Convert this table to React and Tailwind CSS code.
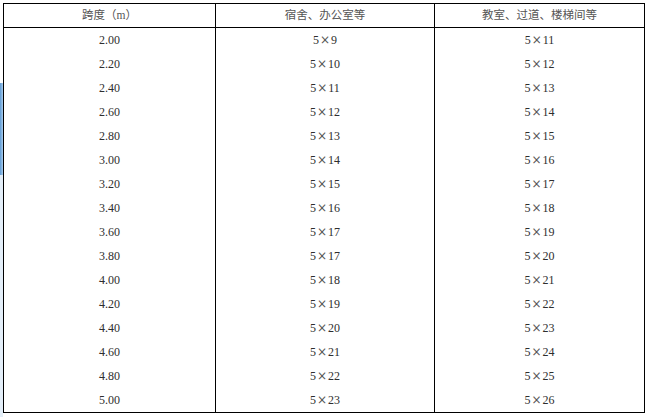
import React from 'react';

// 跨度 / 宿舍、办公室等 / 教室、过道、楼梯间等
const rows = [
    ['2.00', '5×9', '5×11'],
    ['2.20', '5×10', '5×12'],
    ['2.40', '5×11', '5×13'],
    ['2.60', '5×12', '5×14'],
    ['2.80', '5×13', '5×15'],
    ['3.00', '5×14', '5×16'],
    ['3.20', '5×15', '5×17'],
    ['3.40', '5×16', '5×18'],
    ['3.60', '5×17', '5×19'],
    ['3.80', '5×17', '5×20'],
    ['4.00', '5×18', '5×21'],
    ['4.20', '5×19', '5×22'],
    ['4.40', '5×20', '5×23'],
    ['4.60', '5×21', '5×24'],
    ['4.80', '5×22', '5×25'],
    ['5.00', '5×23', '5×26'],
];

const headers = ['跨度（m）', '宿舍、办公室等', '教室、过道、楼梯间等'];

// 5×9 -> wider, lighter multiplication sign like the source doc
const Cell = ({ v }) => {
    if (!v.includes('×')) return v;
    const [a, b] = v.split('×');
    return (
        <>
            {a}
            <span className="px-px text-[12px] font-['DejaVu_Serif',serif] font-light text-[#555]">×</span>
            {b}
        </>
    );
};

const App = () => {
    return (
        <div className="w-[647px] h-[417px] bg-white flex overflow-hidden font-['Liberation_Serif','Noto_Sans_CJK_SC',serif]">
            {/* left window edge strip */}
            <div className="w-[3px] flex flex-col shrink-0">
                <div className="h-[83px] bg-white" />
                <div className="h-[92px] bg-gradient-to-r from-[#5d9ad3] to-[#a9cdef]" />
                <div className="flex-1 bg-[#e3eef8]" />
            </div>

            <div className="pt-[3px]">
                <div className="border border-black grid grid-cols-[211px_219px_210px] text-[12px] text-[#2e2e2e] leading-none">
                    {headers.map((h, i) => (
                        <div
                            key={h}
                            className={`h-[24px] border-b border-black flex items-center justify-center text-[11.5px] text-[#555] ${i > 0 ? 'border-l' : ''}`}
                        >
                            {h}
                        </div>
                    ))}
                    {rows.map(r =>
                        r.map((v, i) => (
                            <div
                                key={r[0] + i}
                                className={`h-[24px] flex items-center justify-center ${i > 0 ? 'border-l border-black' : ''}`}
                            >
                                <Cell v={v} />
                            </div>
                        ))
                    )}
                </div>
            </div>
        </div>
    );
};

export default App;
